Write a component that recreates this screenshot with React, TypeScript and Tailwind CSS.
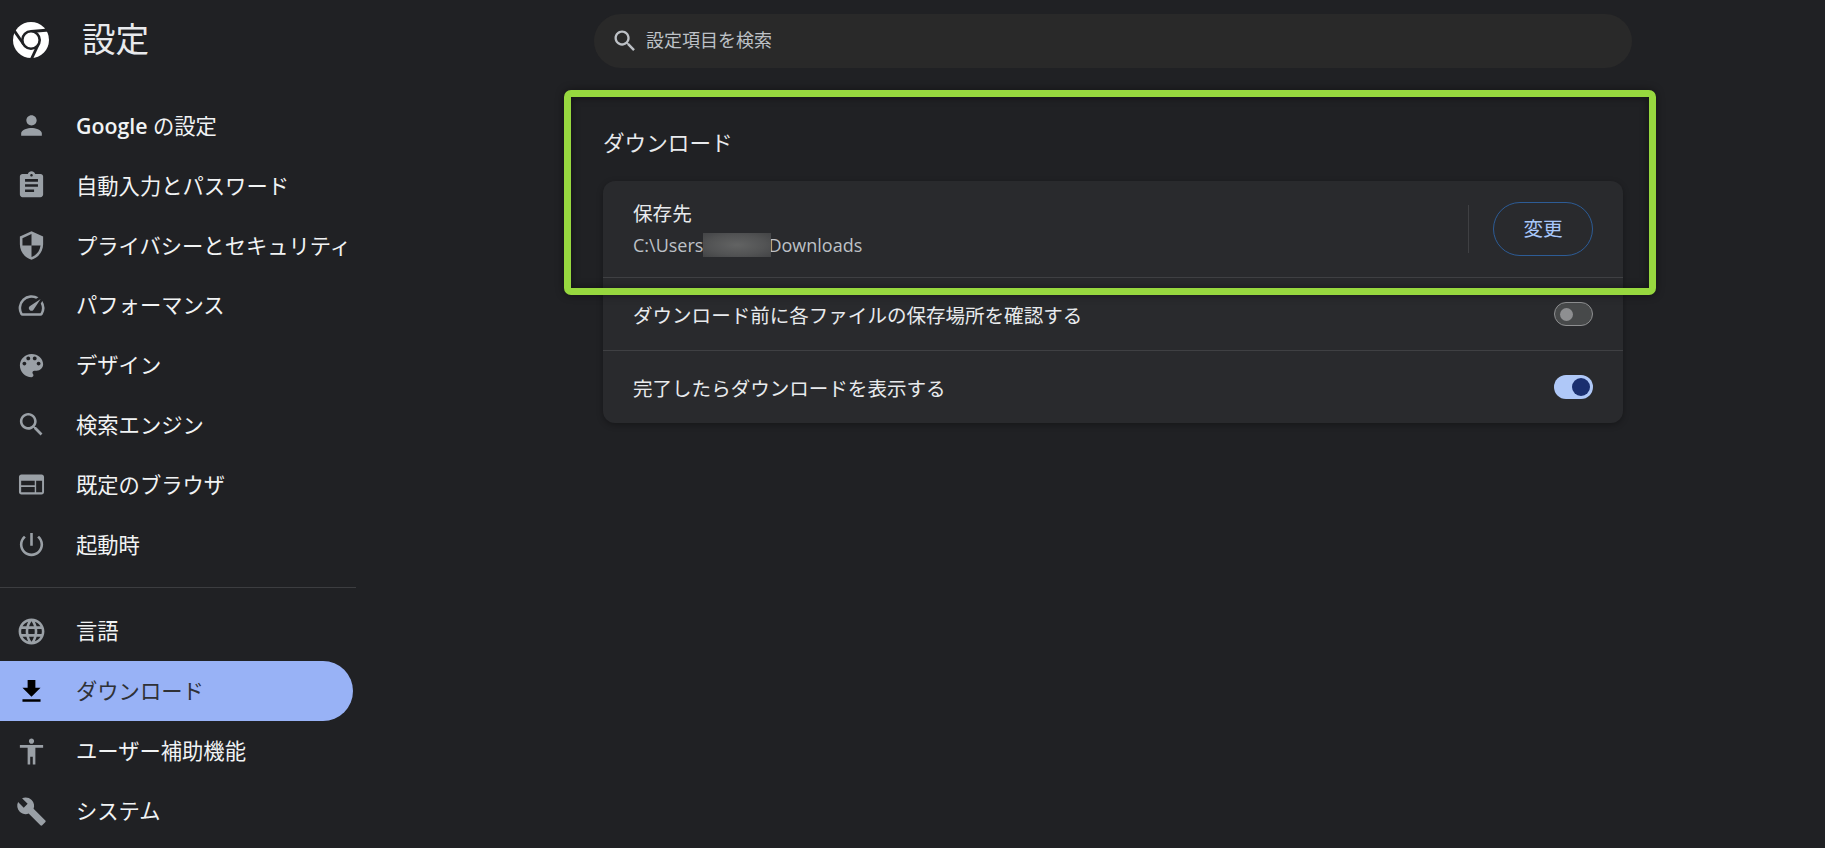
import React from "react";

const font = "font-['Open_Sans','Noto_Sans_CJK_JP',sans-serif]";

const topItems = [
  { label: "の設定", brand: "Google", d: "M12 12c2.21 0 4-1.79 4-4s-1.79-4-4-4-4 1.79-4 4 1.79 4 4 4zm0 2c-2.67 0-8 1.34-8 4v2h16v-2c0-2.66-5.33-4-8-4z" },
  { label: "自動入力とパスワード", d: "M19 3h-4.18C14.4 1.84 13.3 1 12 1c-1.3 0-2.4.84-2.82 2H5c-1.1 0-2 .9-2 2v14c0 1.1.9 2 2 2h14c1.1 0 2-.9 2-2V5c0-1.1-.9-2-2-2zm-7 0c.55 0 1 .45 1 1s-.45 1-1 1-1-.45-1-1 .45-1 1-1zm2 14H7v-2h7v2zm3-4H7v-2h10v2zm0-4H7V7h10v2z" },
  { label: "プライバシーとセキュリティ", d: "M12 1L3 5v6c0 5.55 3.84 10.74 9 12 5.16-1.26 9-6.45 9-12V5l-9-4zm0 10.99h7c-.53 4.12-3.28 7.79-7 8.94V12H5V6.3l7-3.11v8.8z" },
  { label: "パフォーマンス", d: "M20.38 8.57l-1.23 1.85a8 8 0 0 1-.22 7.58H5.07A8 8 0 0 1 15.58 6.85l1.85-1.23A10 10 0 0 0 3.35 19a2 2 0 0 0 1.72 1h13.85a2 2 0 0 0 1.74-1 10 10 0 0 0-.27-10.44zm-9.79 6.84a2 2 0 0 0 2.83 0l5.66-8.49-8.49 5.66a2 2 0 0 0 0 2.83z" },
  { label: "デザイン", d: "M12 3c-4.97 0-9 4.03-9 9s4.03 9 9 9c.83 0 1.5-.67 1.5-1.5 0-.39-.15-.74-.39-1.01-.23-.26-.38-.61-.38-.99 0-.83.67-1.5 1.5-1.5H16c2.76 0 5-2.24 5-5 0-4.42-4.03-8-9-8zm-5.5 9c-.83 0-1.5-.67-1.5-1.5S5.67 9 6.5 9 8 9.67 8 10.5 7.33 12 6.5 12zm3-4C8.67 8 8 7.33 8 6.5S8.67 5 9.5 5s1.5.67 1.5 1.5S10.33 8 9.5 8zm5 0c-.83 0-1.5-.67-1.5-1.5S13.67 5 14.5 5s1.5.67 1.5 1.5S15.33 8 14.5 8zm3 4c-.83 0-1.5-.67-1.5-1.5S16.67 9 17.5 9s1.5.67 1.5 1.5-.67 1.5-1.5 1.5z" },
  { label: "検索エンジン", d: "M15.5 14h-.79l-.28-.27C15.41 12.59 16 11.11 16 9.5 16 5.91 13.09 3 9.5 3S3 5.91 3 9.5 5.91 16 9.5 16c1.61 0 3.09-.59 4.23-1.57l.27.28v.79l5 4.99L20.49 19l-4.99-5zm-6 0C7.01 14 5 11.99 5 9.5S7.01 5 9.5 5 14 7.01 14 9.5 11.99 14 9.5 14z" },
  { label: "既定のブラウザ", d: "M4.2 4.25h15.6c1.1 0 1.9.8 1.9 1.9v11.7c0 1.1-.8 1.9-1.9 1.9H4.2c-1.1 0-1.9-.8-1.9-1.9V6.15c0-1.1.8-1.9 1.9-1.9zM4 9v3.6h10.5V9H4zm0 5v4h10.5v-4H4zm11.6-5v9h4.6V9h-4.6z" },
  { label: "起動時", d: "M13 3h-2v10h2V3zm4.83 2.17l-1.42 1.42C17.99 7.86 19 9.81 19 12c0 3.87-3.13 7-7 7s-7-3.13-7-7c0-2.19 1.01-4.14 2.58-5.42L6.17 5.17C4.23 6.82 3 9.26 3 12c0 4.97 4.03 9 9 9s9-4.03 9-9c0-2.74-1.23-5.18-3.17-6.83z" },
];

const bottomItems = [
  { label: "言語", d: "M11.99 2C6.47 2 2 6.48 2 12s4.47 10 9.99 10C17.52 22 22 17.52 22 12S17.52 2 11.99 2zm6.93 6h-2.95c-.32-1.25-.78-2.45-1.38-3.56 1.84.63 3.37 1.91 4.33 3.56zM12 4.04c.83 1.2 1.48 2.53 1.91 3.96h-3.82c.43-1.43 1.08-2.76 1.91-3.96zM4.26 14C4.1 13.36 4 12.69 4 12s.1-1.36.26-2h3.38c-.08.66-.14 1.32-.14 2 0 .68.06 1.34.14 2H4.26zm.82 2h2.95c.32 1.25.78 2.45 1.38 3.56-1.84-.63-3.37-1.9-4.33-3.56zm2.95-8H5.08c.96-1.66 2.49-2.93 4.33-3.56C8.81 5.55 8.35 6.75 8.03 8zM12 19.96c-.83-1.2-1.48-2.53-1.91-3.96h3.82c-.43 1.43-1.08 2.76-1.91 3.96zM14.34 14H9.66c-.09-.66-.16-1.32-.16-2 0-.68.07-1.35.16-2h4.68c.09.65.16 1.32.16 2 0 .68-.07 1.34-.16 2zm.25 5.56c.6-1.11 1.06-2.31 1.38-3.56h2.95c-.96 1.65-2.49 2.93-4.33 3.56zM16.36 14c.08-.66.14-1.32.14-2 0-.68-.06-1.34-.14-2h3.38c.16.64.26 1.31.26 2s-.1 1.36-.26 2h-3.38z" },
  { label: "ダウンロード", active: true, d: "M19 9h-4V3H9v6H5l7 7 7-7zM5 18v2h14v-2H5z" },
  { label: "ユーザー補助機能", d: "M12 2c1.1 0 2 .9 2 2s-.9 2-2 2-2-.9-2-2 .9-2 2-2zm9 7h-6v13h-2v-6h-2v6H9V9H3V7h18v2z" },
  { label: "システム", d: "M22.7 19l-9.1-9.1c.9-2.3.4-5-1.5-6.9-2-2-5-2.4-7.4-1.3L9 6 6 9 1.6 4.7C.4 7.1.9 10.1 2.9 12.1c1.9 1.9 4.6 2.4 6.9 1.5l9.1 9.1c.4.4 1 .4 1.4 0l2.3-2.3c.5-.4.5-1.1.1-1.4z" },
];

type Item = { label: string; d: string; brand?: string; active?: boolean };

function NavRow({ item, rowClass }: { item: Item; rowClass: string }) {
  return (
    <div
      className={`flex w-[353px] items-center gap-[29px] rounded-r-[30px] pl-[16px] text-[21.3px] ${rowClass} ${
        item.active ? "bg-[#98b2f6] text-[#2f3136]" : "text-[#f1f3f4]"
      }`}
    >
      <svg
        viewBox="0 0 24 24"
        className={`h-[31px] w-[31px] shrink-0 ${item.active ? "fill-black" : "fill-[#9aa0a6]"}`}
      >
        <path fillRule="evenodd" d={item.d} />
      </svg>
      <span className="whitespace-nowrap">
        {item.brand && <span className="font-semibold">{item.brand} </span>}
        {item.label}
      </span>
    </div>
  );
}

function ChromeLogo() {
  const spoke = "M18 9.5 L36 8";
  return (
    <svg viewBox="0 0 36 36" className="h-[36px] w-[36px] shrink-0">
      <circle cx="18" cy="18" r="18" fill="#ffffff" />
      <g stroke="#202124" strokeWidth="2.8" fill="none">
        <path d={spoke} />
        <path d={spoke} transform="rotate(120 18 18)" />
        <path d={spoke} transform="rotate(240 18 18)" />
      </g>
      <circle cx="18" cy="18" r="8.7" fill="#ffffff" stroke="#202124" strokeWidth="2.6" />
    </svg>
  );
}

function Toggle({ on }: { on?: boolean }) {
  if (on) {
    return (
      <div className="flex h-[24px] w-[39px] items-center justify-end rounded-full bg-[#afc8f8] pr-[3px]">
        <div className="h-[18px] w-[18px] rounded-full bg-[#1a2f6f]" />
      </div>
    );
  }
  return (
    <div className="flex h-[24px] w-[39px] items-center rounded-full border border-[#8e8f91] bg-[#47494a] pl-[5px]">
      <div className="h-[13px] w-[13px] rounded-full bg-[#8e8f91]" />
    </div>
  );
}

export default function App() {
  return (
    <div className={`flex h-[848px] w-full overflow-hidden bg-[#202124] ${font}`}>
      <aside className="w-[401px] shrink-0">
        <div className="flex h-[82px] items-center gap-[33px] pb-[3px] pl-[13px]">
          <ChromeLogo />
          <h1 className="text-[33.6px] font-normal text-[#e8eaed]">設定</h1>
        </div>
        <nav className="mt-[14px]">
          {topItems.map((item) => (
            <NavRow key={item.label} item={item} rowClass="h-[59.8px]" />
          ))}
          <div className="my-[13px] h-px w-[356px] bg-[#3c3d40]" />
          {bottomItems.map((item) => (
            <NavRow key={item.label} item={item} rowClass="h-[60px]" />
          ))}
        </nav>
      </aside>

      <main className="flex flex-1 flex-col items-center pt-[14px]">
        <div className="flex h-[54px] w-[1038px] items-center gap-[7px] rounded-full bg-[#292929] pl-[17px]">
          <svg viewBox="0 0 24 24" className="h-[28px] w-[28px] fill-[#bdc1c6]">
            <path d="M15.5 14h-.79l-.28-.27C15.41 12.59 16 11.11 16 9.5 16 5.91 13.09 3 9.5 3S3 5.91 3 9.5 5.91 16 9.5 16c1.61 0 3.09-.59 4.23-1.57l.27.28v.79l5 4.99L20.49 19l-4.99-5zm-6 0C7.01 14 5 11.99 5 9.5S7.01 5 9.5 5 14 7.01 14 9.5 11.99 14 9.5 14z" />
          </svg>
          <span className="pb-[1px] text-[18px] text-[#bdc1c6]">設定項目を検索</span>
        </div>

        <section className="relative mt-[22px] w-[1020px]">
          <h2 className="flex h-[91px] items-center pt-[16px] text-[21.6px] font-normal text-[#e8eaed]">
            ダウンロード
          </h2>
          <div className="overflow-hidden rounded-[12px] bg-[#292a2d] shadow-[0_2px_6px_rgba(0,0,0,0.3)]">
            <div className="flex h-[96px] items-center px-[30px]">
              <div className="flex-1">
                <div className="text-[19.6px] leading-[30px] text-[#e8eaed]">保存先</div>
                <div className="flex h-[31px] items-center pt-[2px] text-[18px] text-[#bdc1c6]">
                  <span>C:\Users</span>
                  <span className="relative h-[24px] w-[68px] bg-[radial-gradient(ellipse_at_center,#626363_0%,#525354_60%,#434446_100%)]" />
                  <span className="-ml-[3px]">Downloads</span>
                </div>
              </div>
              <div className="mr-[24px] h-[48px] w-px bg-[#3f4043]" />
              <button className="h-[54px] w-[100px] rounded-full border border-[#2d5c96] text-[19.6px] text-[#a8c7fa]">
                変更
              </button>
            </div>
            <div className="flex h-[73px] items-center border-t border-[#3f4043] px-[30px]">
              <span className="flex-1 pt-[3px] text-[19.55px] text-[#e8eaed]">
                ダウンロード前に各ファイルの保存場所を確認する
              </span>
              <Toggle />
            </div>
            <div className="flex h-[73px] items-center border-t border-[#3f4043] px-[30px]">
              <span className="flex-1 pt-[3px] text-[19.55px] text-[#e8eaed]">
                完了したらダウンロードを表示する
              </span>
              <Toggle on />
            </div>
          </div>

          {/* green highlight drawn over the screenshot */}
          <div className="pointer-events-none absolute -left-[39px] -right-[33px] top-0 h-[205px] rounded-[7px] border-[7px] border-[#97d83f] shadow-[0_0_8px_rgba(0,0,0,0.45),inset_0_0_8px_rgba(0,0,0,0.45)]" />
        </section>
      </main>
    </div>
  );
}
